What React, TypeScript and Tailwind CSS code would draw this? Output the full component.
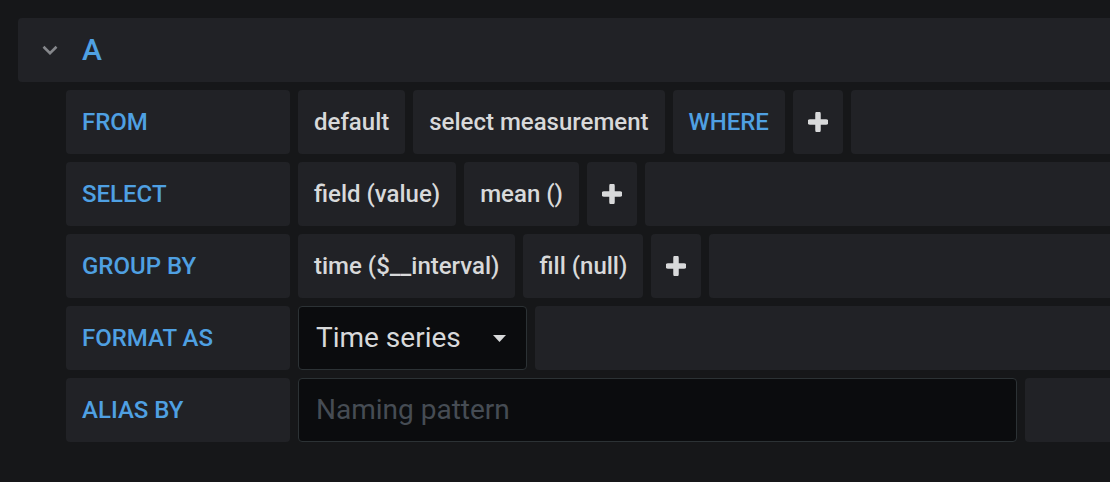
import React from "react";

type Cell = { text?: string; kind: "value" | "keyword" | "plus" | "fill" };

const rows: { label: string; cells: Cell[] }[] = [
  {
    label: "FROM",
    cells: [
      { text: "default", kind: "value" },
      { text: "select measurement", kind: "value" },
      { text: "WHERE", kind: "keyword" },
      { kind: "plus" },
      { kind: "fill" },
    ],
  },
  {
    label: "SELECT",
    cells: [
      { text: "field (value)", kind: "value" },
      { text: "mean ()", kind: "value" },
      { kind: "plus" },
      { kind: "fill" },
    ],
  },
  {
    label: "GROUP BY",
    cells: [
      { text: "time ($__interval)", kind: "value" },
      { text: "fill (null)", kind: "value" },
      { kind: "plus" },
      { kind: "fill" },
    ],
  },
];

function Plus() {
  return (
    <svg width="20" height="20" viewBox="0 0 20 20" className="text-[#d8d9da]">
      <path d="M10 2v16M2 10h16" stroke="currentColor" strokeWidth="5.5" strokeLinecap="round" />
    </svg>
  );
}

function Label({ text }: { text: string }) {
  return (
    <div className="flex w-[224px] shrink-0 items-center rounded-[4px] bg-[#212226] px-4 text-[24px] font-medium text-[#4fa0e2]">
      {text}
    </div>
  );
}

function Part({ cell }: { cell: Cell }) {
  if (cell.kind === "fill") return <div className="flex-1 rounded-[4px] bg-[#212226]" />;
  if (cell.kind === "plus")
    return (
      <div className="flex w-[50px] shrink-0 items-center justify-center rounded-[4px] bg-[#212226]">
        <Plus />
      </div>
    );
  return (
    <div
      className={
        cell.kind === "keyword"
          ? "flex shrink-0 items-center rounded-[4px] bg-[#212226] px-4 text-[24px] font-medium whitespace-nowrap text-[#4fa0e2]"
          : "flex shrink-0 items-center rounded-[4px] bg-[#212226] px-4 text-[24px] font-medium whitespace-nowrap text-[#d8d9da]"
      }
    >
      {cell.text}
    </div>
  );
}

export default function App() {
  return (
    <div className="h-[482px] w-[1110px] overflow-hidden bg-[#161719] font-['Roboto',sans-serif]">
      <div className="w-[1150px] pt-[18px] pl-[18px]">
        {/* query header */}
        <div className="flex h-16 items-center rounded-[4px] bg-[#212226] pl-[24px]">
          <svg width="16" height="10" viewBox="0 0 16 10" className="text-[#85878b]">
            <path d="M1.5 1.8l6.5 6.4 6.5-6.4" fill="none" stroke="currentColor" strokeWidth="2.6" />
          </svg>
          <span className="ml-[24px] text-[30px] leading-none font-medium text-[#4fa0e2]">A</span>
        </div>

        <div className="mt-2 flex flex-col gap-2 pl-12">
          {rows.map((r) => (
            <div key={r.label} className="flex h-16 gap-2">
              <Label text={r.label} />
              {r.cells.map((c, i) => (
                <Part key={i} cell={c} />
              ))}
            </div>
          ))}

          <div className="flex h-16 gap-2">
            <Label text="FORMAT AS" />
            <div className="flex w-[229px] shrink-0 items-center justify-between rounded-[4px] border border-[#2c3235] bg-[#0b0c0e] pr-[20px] pl-[17px] text-[28px] text-[#d8d9da]">
              <span>Time series</span>
              <svg width="13" height="7" viewBox="0 0 13 7">
                <path d="M0 0h13L6.5 7z" fill="#d8d9da" />
              </svg>
            </div>
            <div className="flex-1 rounded-[4px] bg-[#212226]" />
          </div>

          <div className="flex h-16 gap-2">
            <Label text="ALIAS BY" />
            <div className="flex w-[719px] shrink-0 items-center rounded-[4px] border border-[#2c3235] bg-[#0b0c0e] pl-[17px] text-[28px] text-[#464c54]">
              Naming pattern
            </div>
            <div className="flex-1 rounded-[4px] bg-[#212226]" />
          </div>
        </div>
      </div>
    </div>
  );
}
